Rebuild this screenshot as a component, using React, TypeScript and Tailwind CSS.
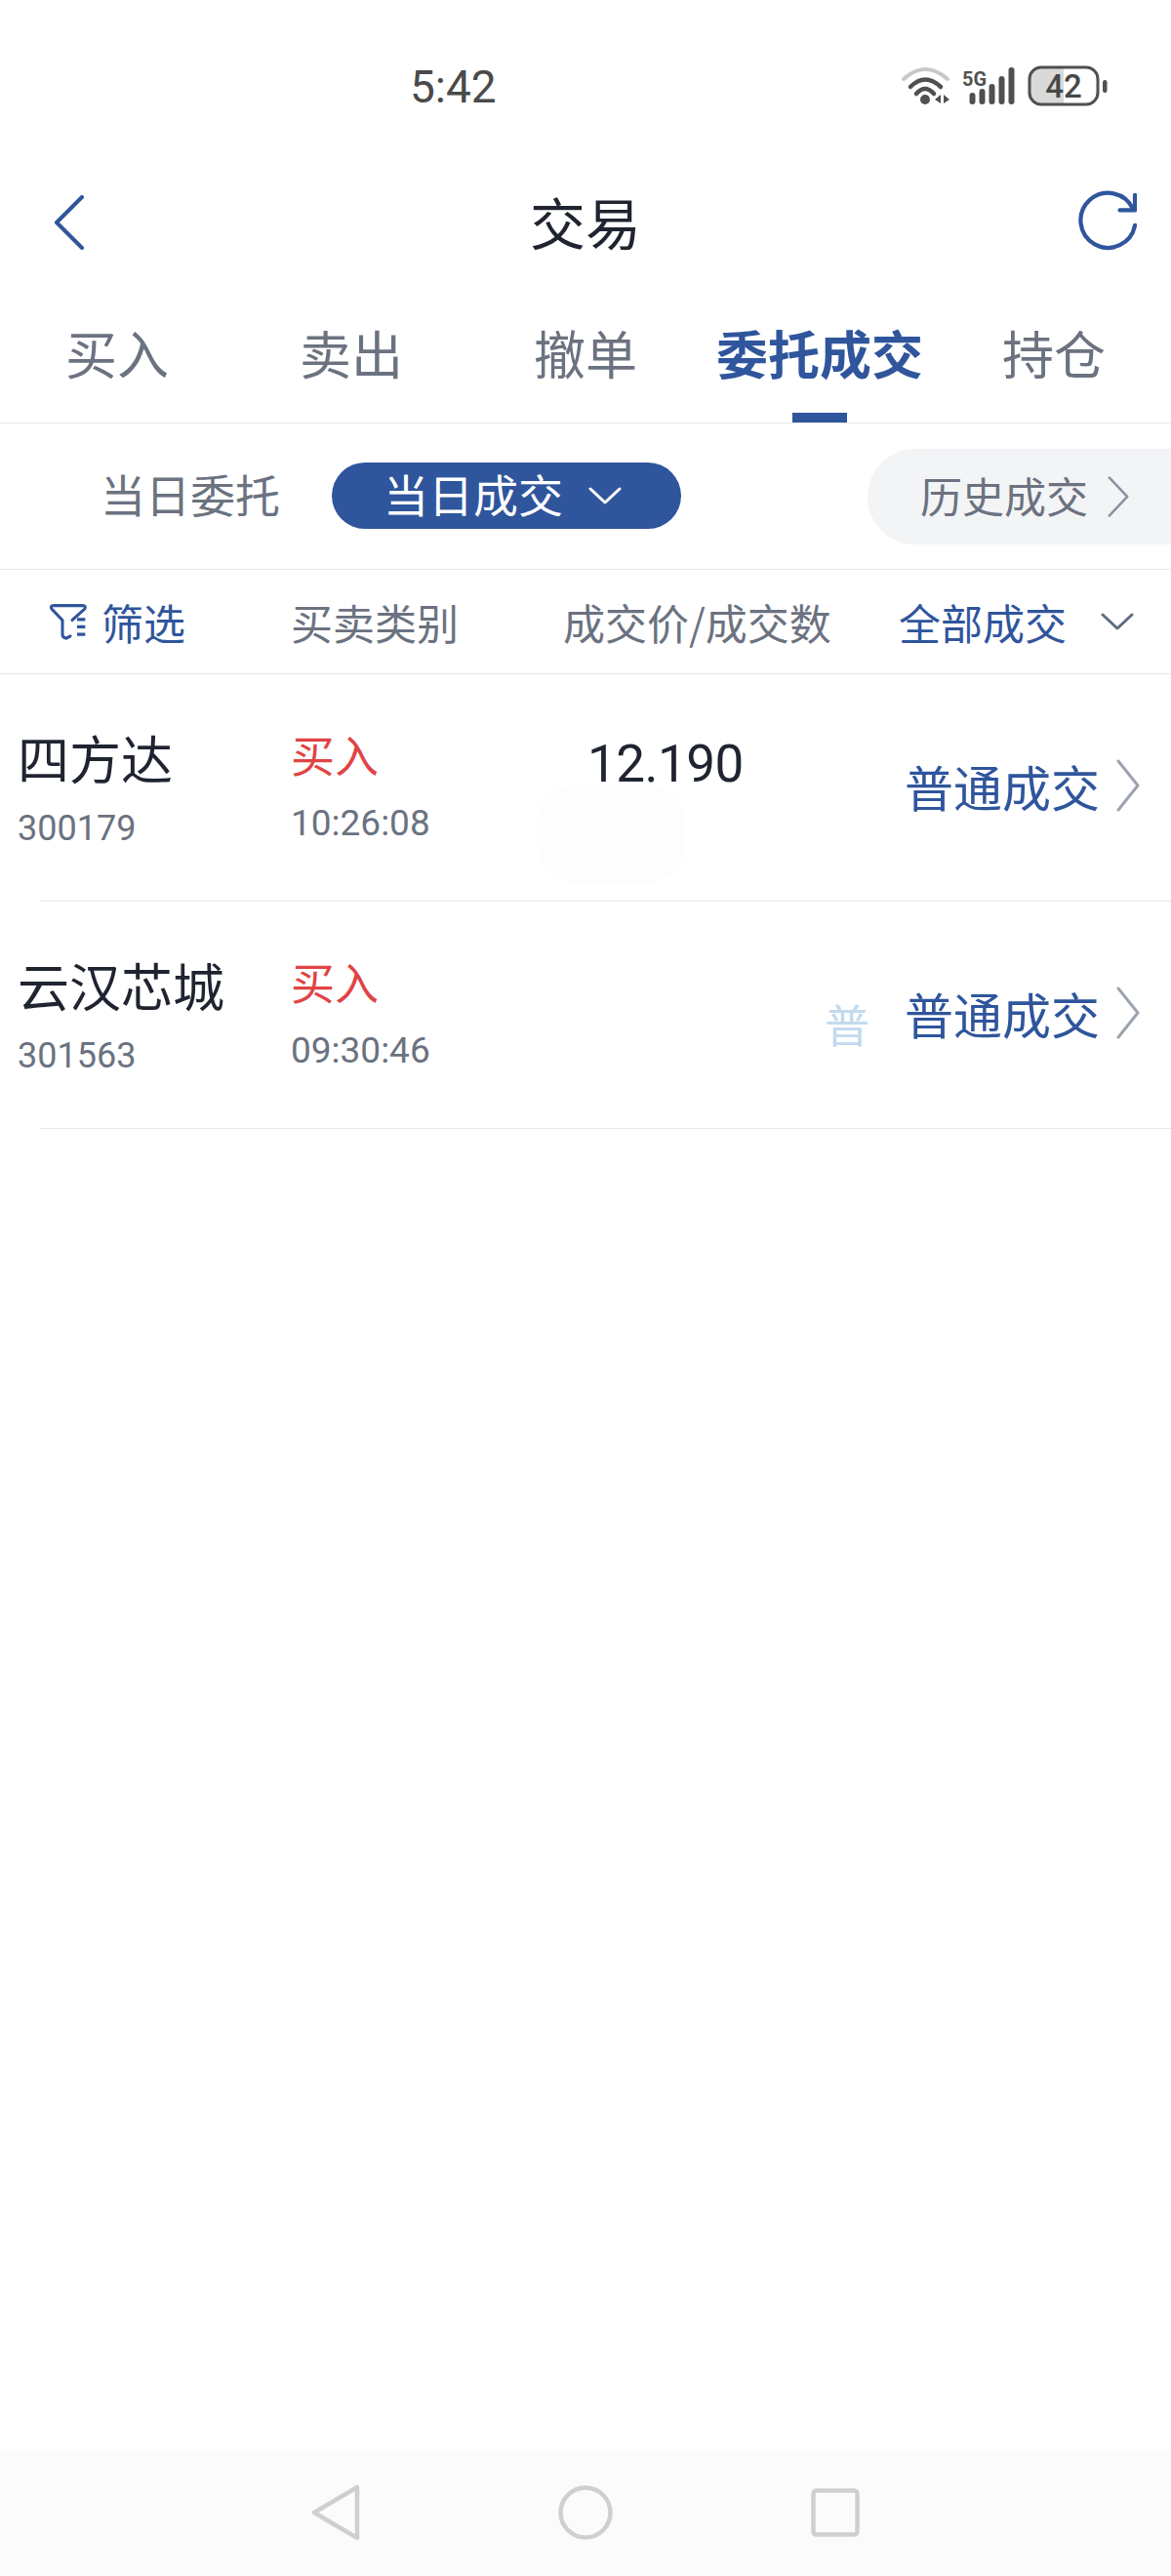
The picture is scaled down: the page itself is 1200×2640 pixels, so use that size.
import type { ReactNode } from "react";

const tabs = ["买入", "卖出", "撤单", "委托成交", "持仓"];

const deals = [
  { name: "四方达", code: "300179", time: "10:26:08", price: "12.190" },
  { name: "云汉芯城", code: "301563", time: "09:30:46", price: "" },
];

function StatusIcons() {
  return (
    <svg width="300" height="100" viewBox="0 0 300 100" fill="none">
      {/* wifi */}
      <path d="M46 41 Q68 21 91 41" stroke="#c8c8c8" strokeWidth="4" strokeLinecap="round" />
      <path d="M53 49 Q68 34 84 49" stroke="#505050" strokeWidth="4.5" strokeLinecap="round" />
      <path d="M59 56 Q68 46 77 56" stroke="#505050" strokeWidth="4.5" strokeLinecap="round" />
      <circle cx="68" cy="62" r="5" fill="#505050" />
      <path d="M78 62 L84 57 V66 Z M87 57 L93 62 L87 66 Z" fill="#505050" />
      {/* signal */}
      <text x="106" y="48" fontFamily="Roboto" fontWeight="700" fontSize="21" fill="#505050" textLength="25" lengthAdjust="spacingAndGlyphs">
        5G
      </text>
      <rect x="113.5" y="55" width="6" height="12" rx="3" fill="#505050" />
      <rect x="123.5" y="51" width="6" height="16" rx="3" fill="#505050" />
      <rect x="133.5" y="46" width="6" height="21" rx="3" fill="#505050" />
      <rect x="143.5" y="38" width="6" height="29" rx="3" fill="#505050" />
      <rect x="153.5" y="29" width="6" height="38" rx="3" fill="#505050" />
      {/* battery */}
      <path d="M210 29 H187 a12 12 0 0 0 -12 12 v14 a12 12 0 0 0 12 12 H210 Z" fill="#d9d9d9" />
      <rect x="175" y="29" width="70" height="38" rx="12" stroke="#505050" strokeWidth="3" />
      <text x="210" y="59.5" textAnchor="middle" fontFamily="Roboto" fontWeight="500" fontSize="33" fill="#484848">
        42
      </text>
      <rect x="250" y="42" width="4.5" height="13" rx="2.2" fill="#505050" />
    </svg>
  );
}

function Chevron({ className, stroke = "#9ca3af", width = 3 }: { className: string; stroke?: string; width?: number }) {
  return (
    <svg className={className} viewBox="0 0 24 54" fill="none" preserveAspectRatio="none">
      <path d="M2 2 L22 27 L2 52" stroke={stroke} strokeWidth={width} strokeLinecap="round" strokeLinejoin="round" />
    </svg>
  );
}

function ChevronDown({ className, stroke }: { className: string; stroke: string }) {
  return (
    <svg className={className} viewBox="0 0 34 20" fill="none">
      <path d="M2 3 L17 17 L32 3" stroke={stroke} strokeWidth="3" strokeLinecap="round" strokeLinejoin="round" />
    </svg>
  );
}

function FilterIcon() {
  return (
    <svg width="40" height="40" viewBox="150 82 120 112" fill="none" stroke="#2f559c" strokeWidth="9" preserveAspectRatio="none">
      <path d="M222 134 L260 102 Q266 92 254 92 H165 Q153 92 159 102 L192 134 V176 Q192 184 204 186 L216 180" strokeLinejoin="round" strokeLinecap="round" />
      <path d="M237 132 H262 M237 153 H262 M237 175 H262" />
    </svg>
  );
}

function HeaderCell({ className, children }: { className: string; children: ReactNode }) {
  return <div className={`text-[43px] leading-[50px] ${className}`}>{children}</div>;
}

export default function App() {
  return (
    <div className="flex h-[2640px] w-[1200px] flex-col overflow-hidden bg-white font-['Noto_Sans_CJK_SC','Noto_Sans',sans-serif]">
      {/* Status bar */}
      <div className="flex h-[170px] items-start pt-[41px] pr-[20px] pl-[420px]">
        <span className="font-['Roboto'] text-[46px] leading-[96px] text-[#4a4a4a]">5:42</span>
        <div className="-mt-[1px] ml-auto">
          <StatusIcons />
        </div>
      </div>

      {/* Title bar */}
      <div className="flex h-[116px] items-center justify-between pr-[35px] pl-[55px]">
        <svg width="32" height="56" viewBox="0 0 32 56" fill="none">
          <path d="M29 2 L3 28 L29 54" stroke="#2f559c" strokeWidth="4" strokeLinecap="round" strokeLinejoin="round" />
        </svg>
        <span className="mb-[5px] ml-[8px] text-[57px] leading-[70px] text-[#1f2430]">交易</span>
        <svg width="60" height="68" viewBox="0 0 62 70" fill="none" stroke="#2f559c" strokeWidth="4.4">
          <path d="M58 21 A29 29 0 1 0 60 38" strokeLinecap="round" />
          <path d="M60 6 V22 H44" strokeLinecap="round" strokeLinejoin="round" />
        </svg>
      </div>

      {/* Tabs */}
      <div className="flex h-[148px] border-b border-[#e5e7eb]">
        {tabs.map((tab) => {
          const active = tab === "委托成交";
          return (
            <div key={tab} className="flex w-[240px] flex-col items-center pt-[42px]">
              <span className={`text-[53px] leading-[66px] ${active ? "font-bold text-[#2f559c]" : "text-[#6b7280]"}`}>{tab}</span>
              {active && <div className="mt-[29px] h-[10px] w-[56px] bg-[#2f559c]" />}
            </div>
          );
        })}
      </div>

      {/* Sub tabs */}
      <div className="flex h-[150px] items-center border-b border-[#e5e7eb] pl-[103px]">
        <span className="mb-[7px] text-[46px] leading-[60px] text-[#6b7280]">当日委托</span>
        <div className="mb-[2px] ml-[53px] flex h-[68px] w-[358px] items-center rounded-[34px] bg-[#2f559c] pl-[53px]">
          <span className="mb-[5px] text-[46px] leading-[60px] text-white">当日成交</span>
          <ChevronDown className="ml-[26px] h-[20px] w-[34px]" stroke="#ffffff" />
        </div>
        <div className="ml-auto flex h-[98px] w-[311px] items-center rounded-l-[49px] bg-[#f3f4f6] pl-[54px]">
          <span className="mb-[3px] text-[43px] leading-[60px] text-[#6b7280]">历史成交</span>
          <Chevron className="ml-[20px] h-[42px] w-[22px]" stroke="#8b93a0" />
        </div>
      </div>

      {/* Column heads */}
      <div className="flex h-[107px] items-center border-b border-[#e5e7eb]">
        <div className="flex w-[298px] items-center pl-[50px]">
          <FilterIcon />
          <HeaderCell className="ml-[14px] text-[#2f559c]">筛选</HeaderCell>
        </div>
        <HeaderCell className="w-[279px] text-[#6b7280]">买卖类别</HeaderCell>
        <HeaderCell className="w-[344px] text-[#6b7280]">成交价/成交数</HeaderCell>
        <HeaderCell className="text-[#2f559c]">全部成交</HeaderCell>
        <ChevronDown className="ml-[35px] h-[20px] w-[34px]" stroke="#5f6b80" />
      </div>

      {/* Deal rows */}
      {deals.map((deal) => (
        <div key={deal.code}>
          <div className="relative flex h-[232px]">
            <div className="w-[298px] pt-[55px] pl-[18px]">
              <div className="text-[53px] leading-[60px] text-[#1f2430]">{deal.name}</div>
              <div className="mt-[23px] font-['Roboto'] text-[36px] leading-[40px] text-[#6b7280]">{deal.code}</div>
            </div>
            <div className="w-[304px] pt-[56px]">
              <div className="text-[45px] leading-[52px] text-[#e04444]">买入</div>
              <div className="mt-[25px] font-['Roboto'] text-[37px] leading-[40px] text-[#6b7280]">{deal.time}</div>
            </div>
            <div className="w-[325px] pt-[62px]">
              <div className="font-['Roboto'] text-[53px] leading-[60px] tracking-[-0.5px] text-[#1f2430]">{deal.price}</div>
            </div>
            <div className="flex items-center pb-[5px]">
              <span className="text-[50px] leading-[60px] text-[#2f559c]">普通成交</span>
              <Chevron className="ml-[17px] h-[54px] w-[24px]" />
            </div>
            {/* faint screen-capture ghosts */}
            {deal.price ? (
              <div className="absolute top-[114px] left-[551px] h-[100px] w-[150px] rounded-[36px] bg-[#fdfdfd]" />
            ) : (
              <span className="absolute top-[94px] left-[845px] text-[46px] leading-[60px] text-[#c4d9ef]">普</span>
            )}
          </div>
          <div className="ml-[40px] h-px bg-[#e5e7eb]" />
        </div>
      ))}

      {/* Android nav bar */}
      <div className="mt-auto flex h-[130px] items-center justify-center bg-[#fbfbfb]">
        <svg width="50" height="58" viewBox="0 0 50 58" fill="none" stroke="#cfcfcf" strokeWidth="4.5">
          <path d="M47 3 V55 L3 29 Z" strokeLinejoin="round" />
        </svg>
        <svg className="ml-[203px]" width="56" height="56" viewBox="0 0 56 56" fill="none" stroke="#cfcfcf" strokeWidth="4.5">
          <circle cx="28" cy="28" r="25.5" />
        </svg>
        <svg className="ml-[203px]" width="50" height="50" viewBox="0 0 50 50" fill="none" stroke="#cfcfcf" strokeWidth="4.5">
          <rect x="2.5" y="2.5" width="45" height="45" rx="3" />
        </svg>
      </div>
    </div>
  );
}
